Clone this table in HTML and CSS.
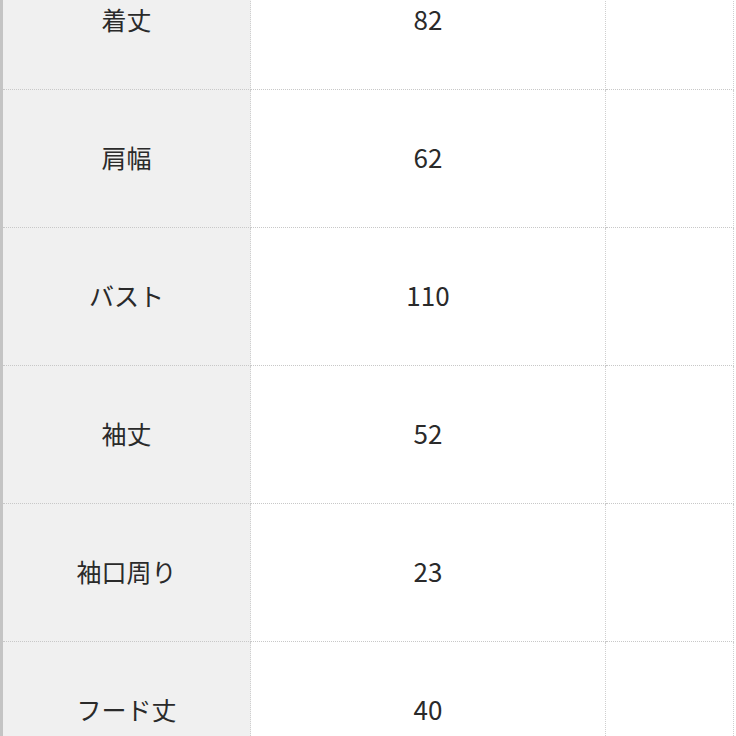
FILE: index.html
```html
<!DOCTYPE html>
<html lang="ja">
<head>
<meta charset="utf-8">
<link rel="stylesheet" href="styles.css">
</head>
<body>
<div class="page">
  <table class="size-table">
    <tbody>
      <tr><th>着丈</th><td>82</td><td class="empty"></td></tr>
      <tr><th>肩幅</th><td>62</td><td class="empty"></td></tr>
      <tr><th>バスト</th><td>110</td><td class="empty"></td></tr>
      <tr><th>袖丈</th><td>52</td><td class="empty"></td></tr>
      <tr><th>袖口周り</th><td>23</td><td class="empty"></td></tr>
      <tr><th>フード丈</th><td>40</td><td class="empty"></td></tr>
    </tbody>
  </table>
</div>
</body>
</html>
```
FILE: styles.css
```css
html, body {
  margin: 0;
  padding: 0;
  background: #ffffff;
}
.page {
  width: 736px;
  height: 736px;
  overflow: hidden;
}
.size-table {
  margin-top: -48px;
  width: 734px;
  border-collapse: collapse;
  border-left: 3px solid #c4c4c4;
  border-right: 1px dotted #cfcfcf;
  font-family: "Noto Sans CJK JP", "Noto Sans", sans-serif;
  color: #2a2a2a;
  font-size: 25px;
  line-height: 36px;
  table-layout: fixed;
}
.size-table th,
.size-table td {
  height: 133px;
  padding: 0 0 4px;
  text-align: center;
  vertical-align: middle;
  border-bottom: 1px dotted #c8c8c8;
  border-right: 1px dotted #cfcfcf;
  font-weight: normal;
}
.size-table th {
  width: 247px;
  background: #f0f0f0;
}
.size-table td {
  width: 354px;
  font-size: 26px;
}
.size-table td.empty {
  width: auto;
}
```
